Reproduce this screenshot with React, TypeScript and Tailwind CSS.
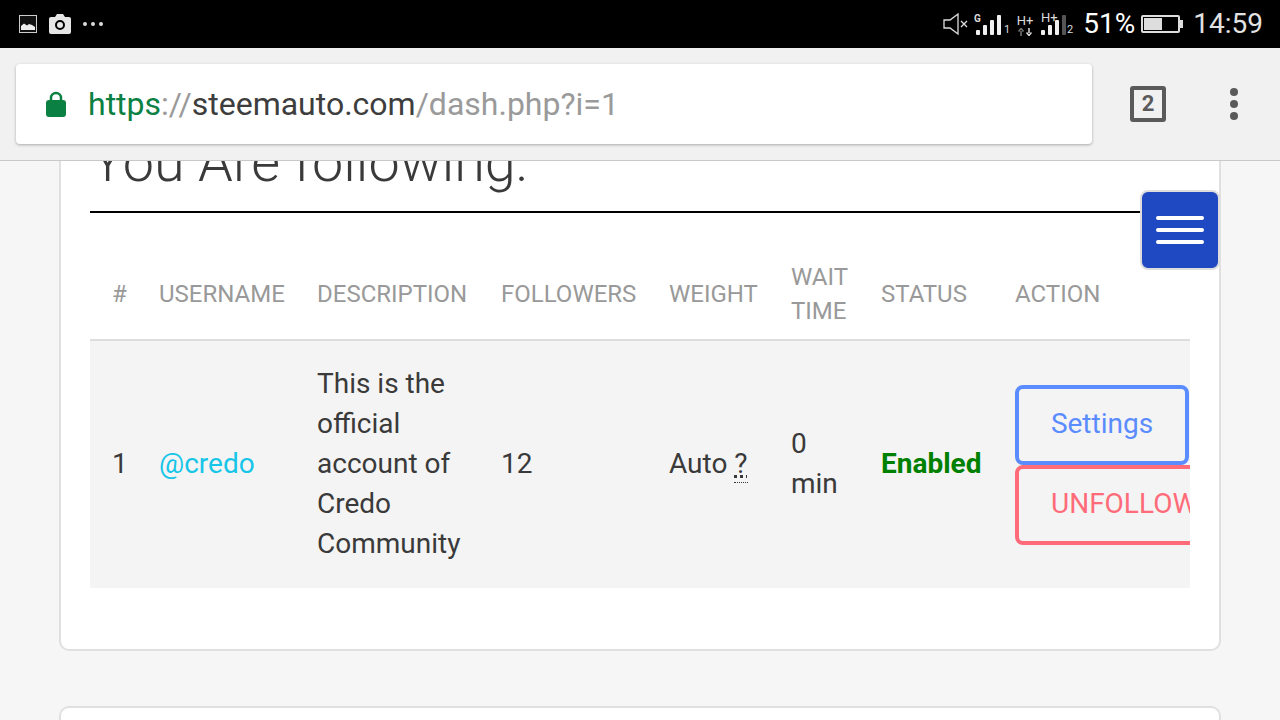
const columns = [
  { label: '#', width: 'w-[47px]' },
  { label: 'USERNAME', width: 'w-[158px]' },
  { label: 'DESCRIPTION', width: 'w-[184px]' },
  { label: 'FOLLOWERS', width: 'w-[168px]' },
  { label: 'WEIGHT', width: 'w-[122px]' },
  { label: 'WAIT TIME', width: 'w-[90px]' },
  { label: 'STATUS', width: 'w-[134px]' },
  { label: 'ACTION', width: 'w-[197px]' },
]

function SignalBars({ level }: { level: number }) {
  const heights = [5, 10, 15, 20]
  return (
    <div className="flex items-end gap-[3px] h-[20px]">
      {heights.map((h, i) => (
        <div
          key={i}
          className={`w-[4px] rounded-[1px] ${i < level ? 'bg-[#f0f0f0]' : 'bg-[#555555]'}`}
          style={{ height: h }}
        />
      ))}
    </div>
  )
}

function StatusBar() {
  return (
    <div className="h-[48px] bg-black flex items-center justify-between pl-[19px] pr-[17px] text-[#e6e6e6]">
      <div className="flex items-center">
        <svg viewBox="0 0 18 18" className="w-[18px] h-[18px]">
          <rect x="0.5" y="0.5" width="17" height="17" fill="#111" stroke="#ccc" />
          <path d="M2 15v-4l3-2.500 3 2 2-1.500 3 1 3 2v3z" fill="#eee" />
        </svg>
        <svg viewBox="0 0 22 20" className="w-[22px] h-[20px] ml-[12px]">
          <path d="M2 3h4l2-3h6l2 3h4a2 2 0 0 1 2 2v13a2 2 0 0 1-2 2H2a2 2 0 0 1-2-2V5a2 2 0 0 1 2-2z" fill="#e6e6e6" />
          <circle cx="11" cy="11" r="4" fill="none" stroke="#000" strokeWidth="2" />
        </svg>
        <div className="flex gap-[4px] ml-[12px]">
          <div className="w-[4px] h-[4px] rounded-full bg-[#ddd]" />
          <div className="w-[4px] h-[4px] rounded-full bg-[#ddd]" />
          <div className="w-[4px] h-[4px] rounded-full bg-[#ddd]" />
        </div>
      </div>
      <div className="flex items-center">
        <svg viewBox="0 0 26 24" className="w-[26px] h-[24px]">
          <path d="M1 8h6l8-6v20l-8-6H1z" fill="none" stroke="#ddd" strokeWidth="1.300" />
          <path d="M18 9l6 6M24 9l-6 6" stroke="#ddd" strokeWidth="1.300" />
        </svg>
        <div className="relative flex items-end ml-[7px] mt-[2px]">
          <span className="absolute left-[-2px] top-[-1px] text-[10px] leading-[10px] font-bold text-[#ddd]">G</span>
          <SignalBars level={4} />
          <span className="text-[11px] leading-[10px] ml-[3px] text-[#ddd]">1</span>
        </div>
        <div className="flex flex-col items-center gap-[1px] ml-[7px] w-[16px] mt-[2px]">
          <span className="text-[13px] leading-[13px] text-[#ddd]">H+</span>
          <svg viewBox="0 0 14 8" className="w-[14px] h-[8px]">
            <path d="M3 8V3M0.500 3.500L3 0.500 5.500 3.500" fill="none" stroke="#777" strokeWidth="1.500" />
            <path d="M11 0v5M8.500 4.500L11 7.500 13.500 4.500" fill="none" stroke="#ddd" strokeWidth="1.500" />
          </svg>
        </div>
        <div className="relative flex items-end ml-[8px] mt-[2px]">
          <span className="absolute left-0 top-[-2px] text-[13px] leading-[10px] text-[#ddd]">H+</span>
          <SignalBars level={3} />
          <span className="text-[11px] leading-[10px] ml-[1px] text-[#ddd]">2</span>
        </div>
        <span className="ml-[10px] text-[28px] leading-none text-white">51%</span>
        <div className="flex items-center ml-[6px]">
          <div className="w-[39px] h-[18px] border-[2px] border-[#ddd] rounded-[2px] p-[1px] flex">
            <div className="w-[18px] bg-[#ddd]" />
          </div>
          <div className="w-[3px] h-[8px] bg-[#ddd]" />
        </div>
        <span className="ml-[10px] text-[28px] leading-none text-[#e2e2e2]">14:59</span>
      </div>
    </div>
  )
}

function Toolbar() {
  return (
    <div className="relative z-10 h-[113px] bg-[#f1f1f1] border-b border-[#c8c8c8] pt-[16px] pl-[16px] flex">
      <div className="w-[1076px] h-[80px] bg-white rounded-[4px] shadow-[0_1px_3px_rgba(0,0,0,0.3)] flex items-center pl-[30px]">
        <svg viewBox="0 0 20 26" className="w-[20px] h-[26px]">
          <path d="M5 11V7a5 5 0 0 1 10 0v4" fill="none" stroke="#0b8043" strokeWidth="2.500" />
          <rect x="0" y="9" width="20" height="17" rx="3" fill="#0b8043" />
        </svg>
        <div className="ml-[22px] text-[32px] leading-none whitespace-nowrap text-[#9a9a9a]">
          <span className="text-[#0b8043]">https</span>://<span className="text-[#3d3d3d]">steemauto.com</span>/dash.php?i=1
        </div>
      </div>
      <div className="ml-[38px] mt-[22px] w-[36px] h-[36px] border-[4px] border-[#5a5a5a] rounded-[3px] flex items-center justify-center text-[22px] leading-none font-bold text-[#5a5a5a]">
        2
      </div>
      <div className="ml-[64px] mt-[24px] flex flex-col gap-[4px]">
        <div className="w-[8px] h-[8px] rounded-full bg-[#5a5a5a]" />
        <div className="w-[8px] h-[8px] rounded-full bg-[#5a5a5a]" />
        <div className="w-[8px] h-[8px] rounded-full bg-[#5a5a5a]" />
      </div>
    </div>
  )
}

const bodyCell = 'pl-[22px] pt-[23px] pb-[24px] align-middle'

function FollowingCard() {
  return (
    <div className="relative -mt-[40px] bg-white border-2 border-[#e0e0e0] rounded-[10px] pl-[29px] pr-[29px] pb-[61px]">
      <h2 className="h-[90px] border-b-2 border-black flex items-end pb-[22px] pl-[1px] text-[55.75px] leading-[54px] font-light text-[#3a3a3a] whitespace-nowrap">
        You Are following:
      </h2>
      <button className="absolute right-[-1px] top-[67px] w-[80px] h-[80px] bg-[#1f49c3] border-2 border-[#dddddd] rounded-[8px] flex flex-col items-center justify-center gap-[8px]">
        <span className="w-[48px] h-[4px] rounded-full bg-white" />
        <span className="w-[48px] h-[4px] rounded-full bg-white" />
        <span className="w-[48px] h-[4px] rounded-full bg-white" />
      </button>
      <div className="mt-[35px] overflow-hidden">
        <table className="w-[1100px] table-fixed border-collapse text-[28px] leading-[40px] text-[#3a3a3a]">
          <thead>
            <tr className="border-b-2 border-[#dddddd]">
              {columns.map((c) => (
                <th key={c.label} className={`${c.width} pl-[22px] pt-[12px] pb-[11px] text-left align-middle text-[24px] leading-[34px] font-normal text-[#999999]`}>
                  {c.label}
                </th>
              ))}
            </tr>
          </thead>
          <tbody>
            <tr className="bg-[#f4f4f4]">
              <td className={bodyCell}>1</td>
              <td className={`${bodyCell} text-[#16c5e8]`}>@credo</td>
              <td className={bodyCell}>This is the official account of Credo Community</td>
              <td className={bodyCell}>12</td>
              <td className={bodyCell}>
                Auto <abbr className="inline-block underline decoration-dotted border-b border-dotted border-[#333333] leading-[36px]">?</abbr>
              </td>
              <td className={`${bodyCell} pr-[10px]`}>0 min</td>
              <td className={`${bodyCell} font-bold text-[#008000]`}>Enabled</td>
              <td className="pl-[22px] py-[24px] align-middle">
                <div className="w-[174px]">
                  <button className="block w-[174px] h-[80px] border-[4px] border-[#5b8cff] rounded-[8px] pb-[2px] text-center text-[#5b8cff]">
                    Settings
                  </button>
                  <button className="block w-[200px] h-[80px] border-[4px] border-[#ff6b78] rounded-[8px] pl-[32px] pb-[2px] text-left whitespace-nowrap text-[#ff6b78]">
                    UNFOLLOW
                  </button>
                </div>
              </td>
            </tr>
          </tbody>
        </table>
      </div>
    </div>
  )
}

export default function App() {
  return (
    <div className="w-[1280px] h-[720px] overflow-hidden flex flex-col bg-[#f6f6f6] font-['Roboto',sans-serif]">
      <StatusBar />
      <Toolbar />
      <div className="flex-1 min-h-0 px-[59px]">
        <FollowingCard />
        <div className="mt-[55px] h-[100px] bg-white border-2 border-[#e0e0e0] rounded-[10px]" />
      </div>
    </div>
  )
}
